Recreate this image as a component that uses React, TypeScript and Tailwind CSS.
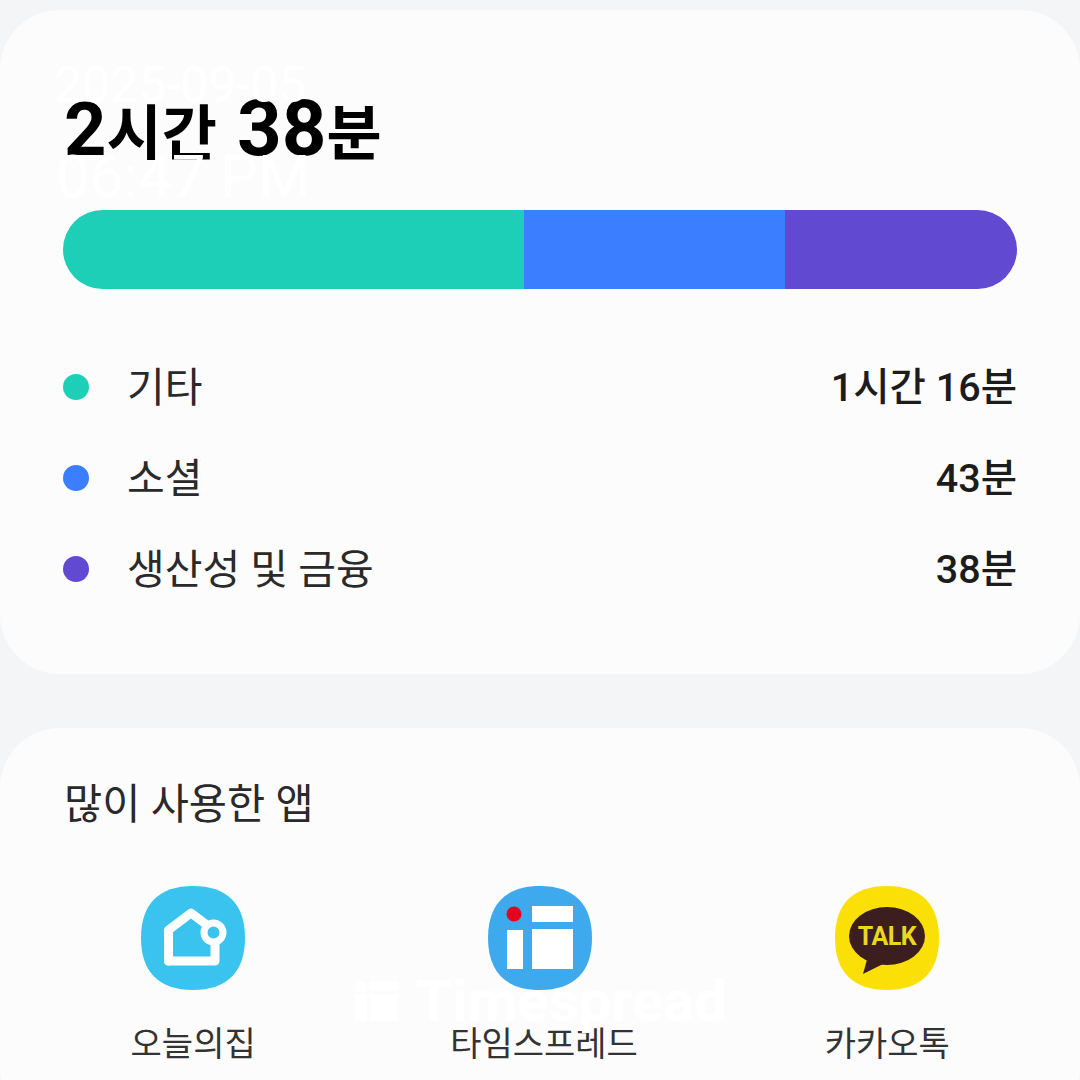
const kr = "font-['Roboto','Noto_Sans_CJK_KR',sans-serif]";

const squircle = "M52 0C86 0 104 18 104 52C104 86 86 104 52 104C18 104 0 86 0 52C0 18 18 0 52 0Z";

function HomeIcon() {
  return (
    <svg width="104" height="104" viewBox="0 0 104 104">
      <path d={squircle} fill="#39c3ee" />
      <path d="M27.5 75V44L50 27L66 39" fill="none" stroke="#fff" strokeWidth="9" strokeLinejoin="round" strokeLinecap="round" />
      <path d="M27.5 75H74V58" fill="none" stroke="#fff" strokeWidth="9" strokeLinejoin="round" strokeLinecap="round" />
      <circle cx="72.5" cy="46.5" r="9.5" fill="#39c3ee" stroke="#fff" strokeWidth="7" />
    </svg>
  );
}

function SpreadIcon() {
  return (
    <svg width="104" height="104" viewBox="0 0 104 104">
      <path d={squircle} fill="#3fa9ee" />
      <circle cx="26" cy="28" r="7.5" fill="#e8001c" />
      <rect x="19" y="44" width="16" height="39" fill="#fff" />
      <rect x="44" y="20" width="41" height="16" fill="#fff" />
      <rect x="44" y="43" width="41" height="40" fill="#fff" />
    </svg>
  );
}

function TalkIcon() {
  return (
    <svg width="104" height="104" viewBox="0 0 104 104">
      <path d={squircle} fill="#fbe008" />
      <ellipse cx="52" cy="50" rx="38" ry="29" fill="#3c1e1e" />
      <path d="M33 70L28 88L52 76Z" fill="#3c1e1e" />
      <text x="52" y="59" textAnchor="middle" fontFamily="Roboto,sans-serif" fontWeight="700" fontSize="25" letterSpacing="-0.5" fill="#ecd624">TALK</text>
    </svg>
  );
}

function WatermarkMark() {
  return (
    <svg width="44" height="40" viewBox="0 0 44 40" fill="#fff">
      <circle cx="6" cy="6" r="6" />
      <rect x="0" y="13" width="12" height="27" />
      <rect x="15" y="0" width="28" height="10" />
      <rect x="15" y="13" width="28" height="27" />
    </svg>
  );
}

const rows = [
  { name: "기타", value: "1시간 16분", color: "bg-[#1dcfb6]" },
  { name: "소셜", value: "43분", color: "bg-[#3b7eff]" },
  { name: "생산성 및 금융", value: "38분", color: "bg-[#6249d2]" },
];

const apps = [
  { name: "오늘의집", icon: <HomeIcon />, time: "1시간 5분", shift: "ml-[1px]" },
  { name: "타임스프레드", icon: <SpreadIcon />, time: "1시간 5분", shift: "ml-[8px]" },
  { name: "카카오톡", icon: <TalkIcon />, time: "1시간 5분", shift: "ml-[0px]" },
];

export default function App() {
  return (
    <div className={`${kr} relative h-[1080px] w-[1080px] overflow-hidden bg-[#f4f5f7] pt-[10px] text-[#1c1c1c]`}>
      <section className="h-[664px] rounded-[60px] bg-[#fcfcfd] px-[63px] pt-[79px]">
        <h1 className="flex h-[80px] items-baseline pl-[1px] font-bold leading-[80px] text-black">
          <span className="text-[74px]">2</span>
          <span className="text-[60px]">시간</span>
          <span className="ml-[20px] text-[78px]">38</span>
          <span className="text-[60px]">분</span>
        </h1>
        <div className="mt-[41px] flex h-[79px] overflow-hidden rounded-full">
          <div className="w-[461px] bg-[#1dcfb6]" />
          <div className="w-[261px] bg-[#3b7eff]" />
          <div className="flex-1 bg-[#6249d2]" />
        </div>
        <ul className="mt-[74px] flex flex-col gap-[41px]">
          {rows.map((r) => (
            <li key={r.name} className="flex h-[50px] items-center">
              <span className={`h-[26px] w-[26px] -translate-y-[1px] rounded-full ${r.color}`} />
              <span className="ml-[38px] text-[41px] leading-[50px] text-[#2a2a2a]">{r.name}</span>
              <span className="ml-auto text-[39.5px] font-medium leading-[50px]">{r.value}</span>
            </li>
          ))}
        </ul>
      </section>

      <section className="mt-[54px] h-[400px] rounded-[60px] bg-[#fcfcfd] pt-[52px]">
        <h2 className="pl-[64px] text-[41.5px] leading-[50px] text-[#2a2a2a]">많이 사용한 앱</h2>
        <div className="mt-[56px] grid grid-cols-3 px-[19px]">
          {apps.map((a) => (
            <div key={a.name} className="flex flex-col items-center">
              {a.icon}
              <span className={`mt-[31px] text-[34px] leading-[46px] text-[#333] ${a.shift}`}>{a.name}</span>
              <span className="mt-[8px] text-[30px] leading-[40px] text-[#666]">{a.time}</span>
            </div>
          ))}
        </div>
      </section>

      <div className="absolute left-[54px] top-[52px] text-[50px] leading-[66px] text-white">2025-09-05</div>
      <div className="absolute left-[56px] top-[139px] text-[60px] leading-[76px] text-white">06:47 PM</div>
      <div className="absolute left-[355px] top-[968px] flex items-center gap-[17px] text-[58px] font-bold leading-[66px] text-white">
        <WatermarkMark />
        <span>Timespread</span>
      </div>
    </div>
  );
}
